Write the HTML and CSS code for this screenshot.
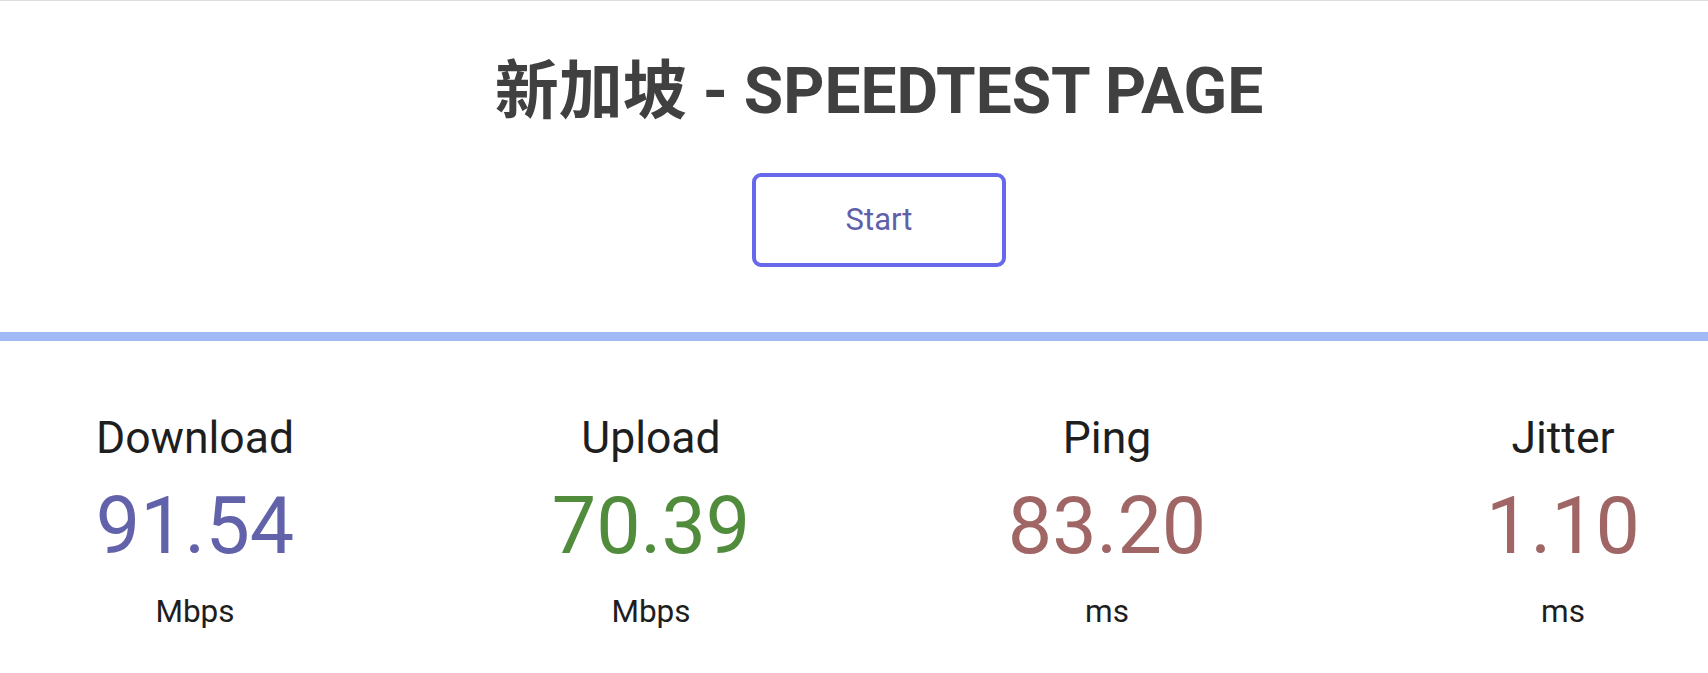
FILE: index.html
```html
<!DOCTYPE html>
<html lang="zh">
<head>
<meta charset="utf-8">
<title>新加坡 - SPEEDTEST PAGE</title>
<link rel="stylesheet" href="styles.css">
</head>
<body>
<main class="page">
  <header class="hero">
    <h1 class="title">新加坡 - SPEEDTEST PAGE</h1>
    <div class="start-btn">Start</div>
  </header>
  <div class="progress"><div class="progress-fill"></div></div>
  <section class="stats">
    <div class="stat">
      <div class="stat-name">Download</div>
      <div class="stat-value dl">91.54</div>
      <div class="stat-unit">Mbps</div>
    </div>
    <div class="stat">
      <div class="stat-name">Upload</div>
      <div class="stat-value ul">70.39</div>
      <div class="stat-unit">Mbps</div>
    </div>
    <div class="stat">
      <div class="stat-name">Ping</div>
      <div class="stat-value ping">83.20</div>
      <div class="stat-unit">ms</div>
    </div>
    <div class="stat">
      <div class="stat-name">Jitter</div>
      <div class="stat-value ping">1.10</div>
      <div class="stat-unit">ms</div>
    </div>
  </section>
</main>
</body>
</html>
```
FILE: styles.css
```css
html, body {
  margin: 0;
  padding: 0;
  background: #ffffff;
  overflow: hidden;
}
body {
  border-top: 1px solid #dedede;
  font-family: Roboto, "Noto Sans CJK SC", "Liberation Sans", sans-serif;
  color: #222222;
}
.page {
  display: flex;
  flex-direction: column;
}
.hero {
  padding-left: 50px;
  display: flex;
  flex-direction: column;
  align-items: center;
}
.title {
  margin: 53px 0 0;
  font-size: 64px;
  line-height: 75px;
  font-weight: 700;
  color: #404040;
  white-space: nowrap;
}
.start-btn {
  margin-top: 44px;
  box-sizing: border-box;
  width: 254px;
  height: 94px;
  border: 4px solid #6868ec;
  border-radius: 9px;
  display: flex;
  align-items: center;
  justify-content: center;
  padding-bottom: 2px;
  font-size: 31px;
  color: #6060aa;
}
.progress {
  margin-top: 65px;
  height: 9px;
  background: #eeeeee;
}
.progress-fill {
  height: 100%;
  width: 100%;
  background: #a1baf6;
}
.stats {
  margin-top: 71px;
  padding-left: 50px;
  display: flex;
  justify-content: center;
  gap: 8px;
}
.stat {
  flex: 0 0 448px;
  display: flex;
  flex-direction: column;
  align-items: center;
  text-align: center;
}
.stat-name {
  font-size: 44.5px;
  line-height: 52px;
  color: #1e1e1e;
}
.stat-value {
  margin-top: 16px;
  font-size: 79px;
  line-height: 92px;
}
.stat-unit {
  margin-top: 22px;
  font-size: 31.5px;
  line-height: 36px;
  color: #1e1e1e;
}
.dl { color: #6262aa; }
.ul { color: #508c3c; }
.ping { color: #a06666; }
```
